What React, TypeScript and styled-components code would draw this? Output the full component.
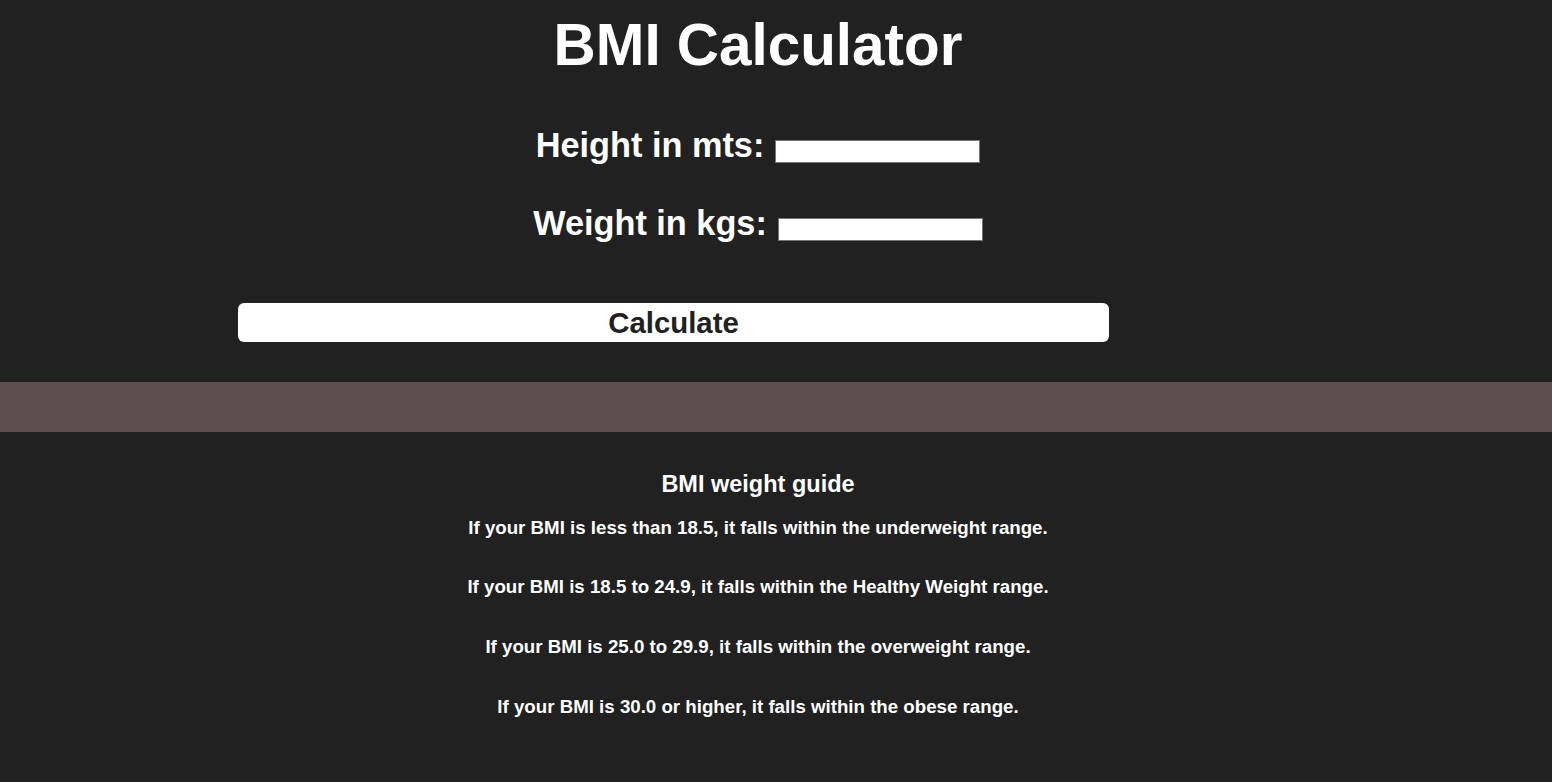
import React from "react";
import styled, { createGlobalStyle } from "styled-components";

const GlobalStyle = createGlobalStyle`
  html, body {
    margin: 0;
    padding: 0;
    background: #212121;
  }
  body {
    font-family: "Liberation Sans", Arial, sans-serif;
    color: #ffffff;
  }
`;

const Page = styled.div`
  display: flex;
  flex-direction: column;
  min-height: 782px;
  background: #212121;
`;

const TopSection = styled.section`
  display: flex;
  flex-direction: column;
  height: 382px;
  box-sizing: border-box;
`;

const Centered = styled.div`
  display: flex;
  flex-direction: column;
  align-items: center;
  padding-right: 36px;
`;

const Title = styled.h1`
  margin: 16px 0 0;
  font-size: 58.4px;
  line-height: 58px;
  font-weight: 700;
`;

const Form = styled.div`
  display: flex;
  flex-direction: column;
  align-items: center;
  margin-top: 54px;
  gap: 44px;
`;

const FieldRow = styled.label`
  display: flex;
  align-items: flex-end;
  gap: 11px;
`;

const FieldLabel = styled.span`
  font-size: 34.3px;
  line-height: 34px;
  font-weight: 700;
`;

const Input = styled.input`
  box-sizing: border-box;
  width: 205px;
  height: 23px;
  margin: 0 0 -1px;
  padding: 0 4px;
  border: 1px solid #767676;
  border-radius: 0;
  background: #ffffff;
  outline: none;
`;

const ButtonWrap = styled.div`
  display: flex;
  padding-left: 238px;
  margin-top: 63px;
`;

const CalcButton = styled.button`
  width: 871px;
  height: 39px;
  border: none;
  border-radius: 6px;
  background: #ffffff;
  color: #212121;
  font-family: "Liberation Sans", Arial, sans-serif;
  font-size: 29.4px;
  line-height: 39px;
  font-weight: 700;
  padding: 0;
  cursor: pointer;
`;

const Band = styled.div`
  height: 50px;
  background: #5d4f4d;
`;

const GuideSection = styled.section`
  display: flex;
  flex-direction: column;
  align-items: center;
  padding: 40.5px 36px 0 0;
`;

const GuideTitle = styled.h2`
  margin: 0;
  font-size: 23.5px;
  line-height: 23px;
  font-weight: 700;
`;

const GuideList = styled.div`
  display: flex;
  flex-direction: column;
  align-items: center;
  gap: 41.6px;
  margin-top: 23.3px;
`;

const GuideItem = styled.p`
  margin: 0;
  font-size: 18.7px;
  line-height: 18px;
  font-weight: 700;
`;

const guide = [
  "If your BMI is less than 18.5, it falls within the underweight range.",
  "If your BMI is 18.5 to 24.9, it falls within the Healthy Weight range.",
  "If your BMI is 25.0 to 29.9, it falls within the overweight range.",
  "If your BMI is 30.0 or higher, it falls within the obese range.",
];

export default function App() {
  return (
    <Page>
      <GlobalStyle />
      <TopSection>
        <Centered>
          <Title>BMI Calculator</Title>
          <Form>
            <FieldRow>
              <FieldLabel>Height in mts:</FieldLabel>
              <Input type="text" />
            </FieldRow>
            <FieldRow>
              <FieldLabel>Weight in kgs:</FieldLabel>
              <Input type="text" />
            </FieldRow>
          </Form>
        </Centered>
        <ButtonWrap>
          <CalcButton type="button">Calculate</CalcButton>
        </ButtonWrap>
      </TopSection>
      <Band />
      <GuideSection>
        <GuideTitle>BMI weight guide</GuideTitle>
        <GuideList>
          {guide.map((g) => (
            <GuideItem key={g}>{g}</GuideItem>
          ))}
        </GuideList>
      </GuideSection>
    </Page>
  );
}
